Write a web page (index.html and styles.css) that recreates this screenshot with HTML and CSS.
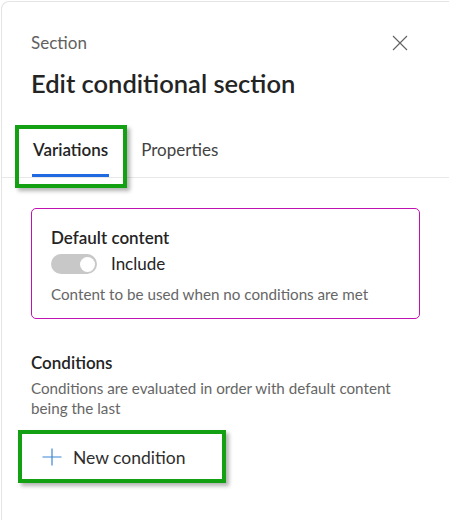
FILE: index.html
```html
<!DOCTYPE html>
<html lang="en">
<head>
<meta charset="utf-8">
<title>Edit conditional section</title>
<link rel="stylesheet" href="styles.css">
</head>
<body>
<div class="panel">
  <header class="head">
    <div class="head-top">
      <span class="eyebrow">Section</span>
      <button class="close" aria-label="Close">
        <svg width="16" height="16" viewBox="0 0 16 16"><path d="M1 1L15 15M15 1L1 15" stroke="#616161" stroke-width="1.1" fill="none"/></svg>
      </button>
    </div>
    <h1 class="title">Edit conditional section</h1>
  </header>
  <nav class="tabs">
    <div class="tab active">Variations</div>
    <div class="tab">Properties</div>
  </nav>
  <main class="content">
    <section class="card">
      <div class="card-title">Default content</div>
      <div class="toggle-row">
        <span class="toggle"><span class="knob"></span></span>
        <span class="toggle-label">Include</span>
      </div>
      <div class="hint">Content to be used when no conditions are met</div>
    </section>
    <section class="conditions">
      <div class="sec-title">Conditions</div>
      <div class="hint">Conditions are evaluated in order with default content being the last</div>
      <button class="new-btn">
        <svg class="plus" width="20" height="20" viewBox="0 0 20 20"><path d="M10 1.5V18.5M0.5 10H19.5" stroke="#3b86d4" stroke-width="1.2" fill="none"/></svg>
        <span>New condition</span>
      </button>
    </section>
  </main>
</div>
<div class="annot annot-tab"></div>
<div class="annot annot-btn"></div>
</body>
</html>
```
FILE: styles.css
```css
html, body {
  margin: 0;
  background: #ffffff;
  overflow: hidden;
}
body {
  position: relative;
  padding: 1px 0 0 1px;
  font-family: Lato, "Open Sans", sans-serif;
  color: #242424;
}
.panel {
  box-sizing: border-box;
  width: 448px;
  min-height: 519px;
  border-top: 1px solid #e4e4e4;
  border-left: 1px solid #e4e4e4;
  border-top-left-radius: 8px;
  padding: 29px 29px 0 29px;
}
.head-top {
  display: flex;
  align-items: center;
  justify-content: space-between;
  height: 24px;
}
.eyebrow {
  font-size: 17px;
  line-height: 24px;
  color: #616161;
}
.close {
  width: 24px;
  height: 24px;
  margin-right: 8px;
  padding: 0;
  border: 0;
  background: none;
  display: flex;
  align-items: center;
  justify-content: center;
}
.title {
  margin: 12px 0 0;
  font-size: 25.5px;
  line-height: 32px;
  font-weight: 600;
  color: #242424;
}
.tabs {
  display: flex;
  gap: 31px;
  margin: 39px -29px 0 -29px;
  padding: 0 29px 0 30px;
  border-bottom: 1px solid #e8e8e8;
}
.tab {
  font-size: 17px;
  line-height: 24px;
  padding: 0 1px 12px;
  border-bottom: 3px solid transparent;
  color: #424242;
}
.tab.active {
  font-weight: 600;
  color: #242424;
  border-bottom-color: #1f6ae0;
}
.content {
  padding-top: 30px;
}
.card {
  border: 1px solid #c012b0;
  border-radius: 5px;
  padding: 17px 19px 14px;
}
.card-title, .sec-title {
  font-size: 17px;
  line-height: 24px;
  font-weight: 600;
  color: #242424;
}
.toggle-row {
  display: flex;
  align-items: center;
  gap: 14px;
  margin-top: 2px;
  height: 24px;
}
.toggle {
  box-sizing: border-box;
  width: 46px;
  height: 20px;
  border-radius: 10px;
  background: #c8c8c8;
  display: flex;
  align-items: center;
  justify-content: flex-end;
  padding-right: 2px;
}
.knob {
  width: 15px;
  height: 15px;
  border-radius: 50%;
  background: #ffffff;
}
.toggle-label {
  font-size: 17px;
  line-height: 24px;
  color: #242424;
}
.hint {
  font-size: 15.2px;
  line-height: 20px;
  color: #666666;
}
.card .hint {
  margin-top: 8px;
}
.conditions {
  margin-top: 32px;
}
.sec-title + .hint {
  margin-top: 3px;
}
.new-btn {
  display: flex;
  align-items: center;
  height: 40px;
  margin: 19px 0 0 11px;
  padding: 0;
  border: 0;
  background: none;
  font-family: inherit;
  font-size: 17.5px;
  color: #2e2e2e;
}
.plus {
  margin-right: 11px;
}
.annot {
  position: absolute;
  box-sizing: border-box;
  border: 4px solid #13a013;
  box-shadow: 3px 3px 4px rgba(0, 0, 0, 0.3);
}
.annot-tab {
  left: 15px;
  top: 125px;
  width: 112px;
  height: 63px;
}
.annot-btn {
  left: 18px;
  top: 430px;
  width: 208px;
  height: 53px;
}
```
